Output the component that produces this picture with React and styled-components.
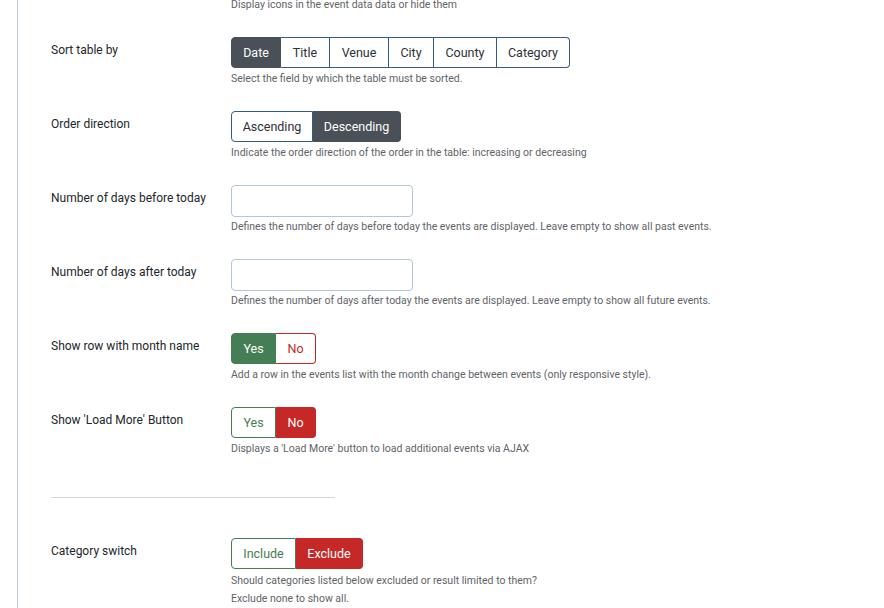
import styled, { createGlobalStyle } from "styled-components";

const GlobalStyle = createGlobalStyle`
    html, body {
        margin: 0;
        padding: 0;
        background: #fff;
        font-family: Roboto, "Noto Sans", "Liberation Sans", sans-serif;
        color: #22262a;
        overflow: hidden;
    }
`

const Painel = styled.div`
    margin-left: 17px;
    min-height: 608px;
    border-left: 1px solid #c3cedb;
    padding-left: 33px;
    box-sizing: border-box;
`

const Linha = styled.div`
    display: grid;
    grid-template-columns: 180px 1fr;
    margin-bottom: ${(p) => p.$baixo ?? 25}px;
`

const Rotulo = styled.label`
    font-size: 12px;
    line-height: 16px;
    padding-top: 5px;
    color: #22262a;
`

const Ajuda = styled.div`
    font-size: 10.5px;
    line-height: ${(p) => p.$altura ?? 15}px;
    color: #5f6368;
    margin-top: ${(p) => p.$topo ?? 3}px;
    margin-bottom: ${(p) => p.$baixo ?? 0}px;
    margin-left: ${(p) => p.$recuo ?? 0}px;
`

const Grupo = styled.div`
    display: inline-flex;
    height: 31px;
`

const cores = {
    neutro: { borda: "#37598a", texto: "#2c3036", fundo: "#495057" },
    sim: { borda: "#457d54", texto: "#457d54", fundo: "#457d54" },
    nao: { borda: "#c52827", texto: "#c52827", fundo: "#c52827" },
}

const Botao = styled.button`
    box-sizing: border-box;
    height: 31px;
    width: ${(p) => p.$largura}px;
    margin: 0;
    padding: 0;
    font-family: inherit;
    font-size: 12.5px;
    border: 1px solid ${(p) => cores[p.$tipo].borda};
    border-left-width: ${(p) => (p.$primeiro ? 1 : 0)}px;
    background: ${(p) => (p.$ativo ? cores[p.$tipo].fundo : "#fff")};
    color: ${(p) => (p.$ativo ? "#fff" : cores[p.$tipo].texto)};
    border-color: ${(p) => (p.$ativo ? cores[p.$tipo].fundo : cores[p.$tipo].borda)};
    cursor: pointer;

    &:first-child {
        border-radius: 4px 0 0 4px;
    }

    &:last-child {
        border-radius: 0 4px 4px 0;
    }
`

const Campo = styled.input`
    box-sizing: border-box;
    width: 182px;
    height: 32px;
    border: 1px solid #b5c5da;
    border-radius: 4px;
    font-family: inherit;
    font-size: 13px;
    padding: 0 8px;
    display: block;
`

const Divisor = styled.hr`
    width: 284px;
    margin: 41px 0 40px 0;
    border: 0;
    border-top: 1px solid #d3d7dc;
`

const ordenacao = [
    ["Date", 50],
    ["Title", 49],
    ["Venue", 59],
    ["City", 45],
    ["County", 63],
    ["Category", 73],
]

const BotoesSimNao = ({ valor }) => (
    <Grupo>
        <Botao $tipo="sim" $primeiro $largura={45} $ativo={valor}>Yes</Botao>
        <Botao $tipo="nao" $largura={40} $ativo={!valor}>No</Botao>
    </Grupo>
)

const App = () => {
    return (
        <>
            <GlobalStyle />
            <Painel>
                <Ajuda $topo={-3} $baixo={25} $recuo={180}>
                    Display icons in the event data data or hide them
                </Ajuda>

                <Linha>
                    <Rotulo>Sort table by</Rotulo>
                    <div>
                        <Grupo>
                            {ordenacao.map(([nome, largura], i) => (
                                <Botao key={nome} $tipo="neutro" $primeiro={i === 0} $largura={largura} $ativo={i === 0}>
                                    {nome}
                                </Botao>
                            ))}
                        </Grupo>
                        <Ajuda>Select the field by which the table must be sorted.</Ajuda>
                    </div>
                </Linha>

                <Linha>
                    <Rotulo>Order direction</Rotulo>
                    <div>
                        <Grupo>
                            <Botao $tipo="neutro" $primeiro $largura={82}>Ascending</Botao>
                            <Botao $tipo="neutro" $largura={88} $ativo>Descending</Botao>
                        </Grupo>
                        <Ajuda>Indicate the order direction of the order in the table: increasing or decreasing</Ajuda>
                    </div>
                </Linha>

                <Linha>
                    <Rotulo>Number of days before today</Rotulo>
                    <div>
                        <Campo type="text" />
                        <Ajuda $topo={2}>Defines the number of days before today the events are displayed. Leave empty to show all past events.</Ajuda>
                    </div>
                </Linha>

                <Linha>
                    <Rotulo>Number of days after today</Rotulo>
                    <div>
                        <Campo type="text" />
                        <Ajuda $topo={2}>Defines the number of days after today the events are displayed. Leave empty to show all future events.</Ajuda>
                    </div>
                </Linha>

                <Linha>
                    <Rotulo>Show row with month name</Rotulo>
                    <div>
                        <BotoesSimNao valor={true} />
                        <Ajuda>Add a row in the events list with the month change between events (only responsive style).</Ajuda>
                    </div>
                </Linha>

                <Linha $baixo={0}>
                    <Rotulo>Show 'Load More' Button</Rotulo>
                    <div>
                        <BotoesSimNao valor={false} />
                        <Ajuda>Displays a 'Load More' button to load additional events via AJAX</Ajuda>
                    </div>
                </Linha>

                <Divisor />

                <Linha>
                    <Rotulo>Category switch</Rotulo>
                    <div>
                        <Grupo>
                            <Botao $tipo="sim" $primeiro $largura={65}>Include</Botao>
                            <Botao $tipo="nao" $largura={67} $ativo>Exclude</Botao>
                        </Grupo>
                        <Ajuda $altura={18}>
                            Should categories listed below excluded or result limited to them?
                            <br />
                            Exclude none to show all.
                        </Ajuda>
                    </div>
                </Linha>
            </Painel>
        </>
    )
}

export default App;
